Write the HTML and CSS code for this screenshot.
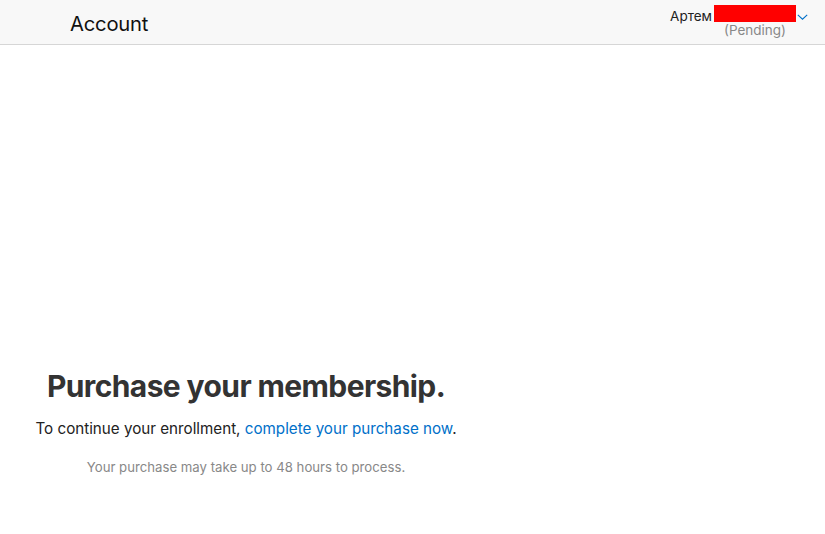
FILE: index.html
```html
<!DOCTYPE html>
<html>
<head>
<meta charset="utf-8">
<link rel="stylesheet" href="styles.css">
</head>
<body>
<header class="topbar">
  <div class="title">Account</div>
  <div class="user">
    <div class="user-row">
      <span class="user-name">Артем</span>
      <span class="redact"></span>
      <svg class="chev" width="11" height="6" viewBox="0 0 11 6"><path d="M0.8 0.8l4.7 4.4L10.2 0.8" fill="none" stroke="#0070c9" stroke-width="1.1"/></svg>
    </div>
    <div class="user-status">(Pending)</div>
  </div>
</header>
<main class="main">
  <section class="col">
    <h1 class="headline">Purchase your membership.</h1>
    <p class="lead">To continue your enrollment, <a class="link" href="#">complete your purchase now</a>.</p>
    <p class="note">Your purchase may take up to 48 hours to process.</p>
  </section>
</main>
</body>
</html>
```
FILE: styles.css
```css
html, body { margin: 0; padding: 0; background: #fff; }
body { font-family: Inter, "Liberation Sans", Arial, sans-serif; color: #333; }
.topbar {
  height: 44px;
  background: #f8f8f8;
  border-bottom: 1px solid #d6d6d6;
  display: flex;
  justify-content: space-between;
  align-items: flex-start;
  padding: 0 17px 0 70px;
}
.title { font-size: 20.2px; color: #111; line-height: 24px; padding-top: 12px; letter-spacing: -0.2px; }
.user { display: flex; flex-direction: column; align-items: flex-end; padding-top: 5px; }
.user-row { display: flex; align-items: flex-start; }
.user-name { font-size: 13.5px; color: #222; line-height: 16px; padding-top: 3px; margin-left: 1px; margin-right: 2px; }
.redact { display: block; width: 82px; height: 17px; background: #ff0000; }
.chev { display: block; margin-top: 9px; margin-left: 1px; }
.user-status { font-size: 13.5px; color: #888; line-height: 16px; margin-right: 22px; margin-top: -2px; }
.main { display: flex; }
.col { width: 492px; text-align: center; padding-top: 322px; }
.headline { margin: 0; font-size: 30px; font-weight: 700; color: #333; line-height: 38px; letter-spacing: -0.6px; }
.lead { margin: 13px 0 0; font-size: 15.2px; line-height: 22px; color: #222; }
.link { color: #0070c9; text-decoration: none; }
.note { margin: 18px 0 0; font-size: 13.2px; color: #888; line-height: 18px; }
```
